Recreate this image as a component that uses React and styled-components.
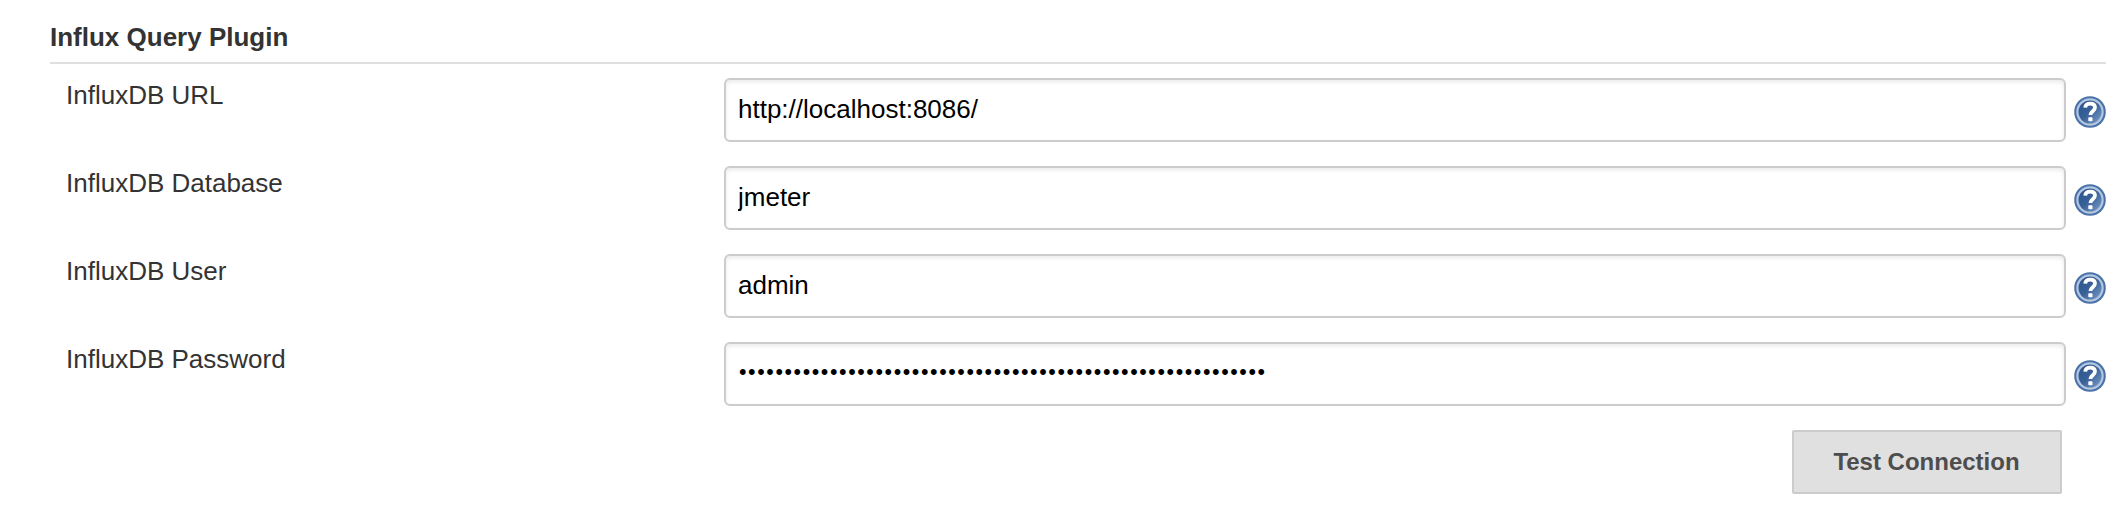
import React from "react";
import styled, { createGlobalStyle, css } from "styled-components";

const GlobalStyle = createGlobalStyle`
  * { box-sizing: border-box; }
  body {
    margin: 0;
    background: #fff;
    color: #333;
    font: 26px/30px "Liberation Sans", Helvetica, Arial, sans-serif;
  }
`;

const Section = styled.section`
  width: 2056px;
  margin-left: 50px;
  padding-top: 22px;
`;

const Heading = styled.h2`
  margin: 0;
  height: 42px;
  font-size: 26px;
  line-height: 30px;
  font-weight: bold;
  border-bottom: 2px solid #e0e0e0;
`;

const Fields = styled.div`
  display: flex;
  flex-direction: column;
  gap: 24px;
  padding-top: 14px;
`;

const Row = styled.div`
  display: flex;
  height: 64px;
`;

const Label = styled.label`
  width: 674px;
  padding: 2px 0 0 16px;
`;

const Input = styled.input`
  width: 1342px;
  height: 64px;
  padding: 0 12px 2px;
  border: 2px solid #ccc;
  border-radius: 6px;
  outline: none;
  background: #fff;
  color: #000;
  font: inherit;
  box-shadow: inset 0 2px 4px rgba(0, 0, 0, 0.09);
  ${(p) =>
    p.type === "password" &&
    css`
      padding: 0 13px 3px;
      font-size: 21.5px;
      letter-spacing: 1.57px;
    `}
`;

const Help = styled.svg`
  width: 32px;
  height: 32px;
  margin: 18px 0 0 8px;
`;

const Actions = styled.div`
  display: flex;
  justify-content: flex-end;
  padding: 24px 44px 0 0;
`;

const Button = styled.button`
  width: 270px;
  height: 64px;
  padding: 0 1px 1px 0;
  border: 2px solid #ccc;
  border-radius: 2px;
  background: #e0e0e0;
  color: #4d4d4d;
  font: bold 24px "Liberation Sans", Helvetica, Arial, sans-serif;
`;

const fields = [
  { id: "url", label: "InfluxDB URL", value: "http://localhost:8086/" },
  { id: "database", label: "InfluxDB Database", value: "jmeter" },
  { id: "user", label: "InfluxDB User", value: "admin" },
  { id: "password", label: "InfluxDB Password", value: "x".repeat(58), type: "password" },
];

function HelpIcon() {
  return (
    <Help viewBox="0 0 32 32" aria-label="Help">
      <defs>
        <linearGradient id="help-fill" x1="0" y1="0" x2="1" y2="1">
          <stop offset="0" stopColor="#2a528b" />
          <stop offset="0.5" stopColor="#3a6299" />
          <stop offset="1" stopColor="#86a5cd" />
        </linearGradient>
      </defs>
      <circle cx="16" cy="16" r="15.8" fill="#4a72a8" />
      <circle cx="16" cy="16" r="12.6" fill="url(#help-fill)" stroke="#b4c7e0" strokeWidth="2.2" />
      <path d="M11.2 11.6c.3-2.8 2.2-4 5-4 3 0 4.8 1.4 4.8 3.9 0 3.8-4.6 3.6-4.6 7.6" fill="none" stroke="#fff" strokeWidth="3.8" />
      <rect x="14.3" y="21.2" width="4.2" height="4" rx="0.8" fill="#fff" />
    </Help>
  );
}

export default function App() {
  return (
    <>
      <GlobalStyle />
      <Section>
        <Heading>Influx Query Plugin</Heading>
        <Fields>
          {fields.map((f) => (
            <Row key={f.id}>
              <Label htmlFor={f.id}>{f.label}</Label>
              <Input id={f.id} type={f.type || "text"} defaultValue={f.value} />
              <HelpIcon />
            </Row>
          ))}
        </Fields>
        <Actions>
          <Button type="button">Test Connection</Button>
        </Actions>
      </Section>
    </>
  );
}
